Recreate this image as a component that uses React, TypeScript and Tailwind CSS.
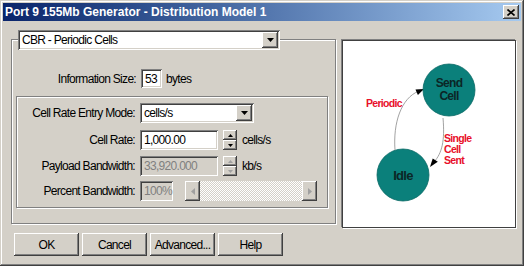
import React from "react";

const raised =
  "shadow-[inset_-1px_-1px_0_#404040,inset_1px_1px_0_#ffffff,inset_-2px_-2px_0_#808080,inset_2px_2px_0_#d4d0c8]";
const sunken =
  "shadow-[inset_1px_1px_0_#808080,inset_-1px_-1px_0_#ffffff,inset_2px_2px_0_#404040,inset_-2px_-2px_0_#d4d0c8]";
const etched = "border border-[#808080] shadow-[inset_1px_1px_0_#ffffff,1px_1px_0_#ffffff]";

function DownTri({ color = "#000" }: { color?: string }) {
  return (
    <svg width="7" height="4" viewBox="0 0 7 4">
      <polygon points="0,0 7,0 3.5,4" fill={color} />
    </svg>
  );
}

function Combo({ w, text }: { w: string; text: string }) {
  return (
    <div className={`${w} h-[20px] bg-white ${sunken} flex items-center pl-[4px] pr-[2px]`}>
      <span className="flex-1 text-black">{text}</span>
      <div className={`w-[16px] h-[16px] bg-[#d4d0c8] ${raised} flex items-center justify-center`}>
        <DownTri />
      </div>
    </div>
  );
}

function Spinner({ disabled }: { disabled?: boolean }) {
  const c = disabled ? "#a0a0a0" : "#000";
  return (
    <div className="w-[14px] h-[20px] flex flex-col">
      <div className={`h-[10px] bg-[#d4d0c8] ${raised} flex items-center justify-center`}>
        <svg width="5" height="3" viewBox="0 0 5 3">
          <polygon points="2.5,0 5,3 0,3" fill={c} />
        </svg>
      </div>
      <div className={`h-[10px] bg-[#d4d0c8] ${raised} flex items-center justify-center`}>
        <svg width="5" height="3" viewBox="0 0 5 3">
          <polygon points="0,0 5,0 2.5,3" fill={c} />
        </svg>
      </div>
    </div>
  );
}

function Label({ w, children }: { w: string; children: React.ReactNode }) {
  return <div className={`${w} text-right text-black shrink-0`}>{children}</div>;
}

function Btn({ children }: { children: React.ReactNode }) {
  return (
    <div className={`w-[65px] h-[23px] bg-[#d4d0c8] ${raised} flex items-center justify-center text-black`}>
      {children}
    </div>
  );
}

function Diagram() {
  return (
    <svg width="172" height="186" viewBox="0 0 172 186">
      <path d="M52 109 C 50 82, 58 57, 76 50" stroke="#8a8a8a" fill="none" strokeWidth="0.8" />
      <polygon points="81,48 72.5,48.6 74.9,54" fill="#000" />
      <path d="M100 77 C 102 100, 99 112, 91 121" stroke="#8a8a8a" fill="none" strokeWidth="0.8" />
      <polygon points="87,126 94.8,120.8 89.7,117.6" fill="#000" />
      <circle cx="106" cy="49" r="26" fill="#0b807b" stroke="#0a6a66" strokeWidth="0.8" />
      <circle cx="60" cy="134" r="26" fill="#0b807b" stroke="#0a6a66" strokeWidth="0.8" />
      <g fontFamily="'Liberation Sans', Arial, sans-serif" fontWeight="bold" fontSize="12" fill="#0b2626" textAnchor="middle">
        <text x="106" y="46">Send</text>
        <text x="106" y="59">Cell</text>
        <text x="60" y="139" fontSize="13">Idle</text>
      </g>
      <g fontFamily="'Liberation Sans', Arial, sans-serif" fontWeight="bold" fontSize="10.5" fill="#e8102a">
        <text x="23" y="66">Periodic</text>
        <text x="101" y="101">Single</text>
        <text x="101" y="112">Cell</text>
        <text x="101" y="123">Sent</text>
      </g>
    </svg>
  );
}

export default function App() {
  return (
    <div
      className="w-[524px] h-[266px] bg-[#d4d0c8] p-[3px] flex flex-col text-[12px] tracking-[-0.7px] leading-none shadow-[inset_-1px_-1px_0_#404040,inset_1px_1px_0_#d4d0c8,inset_-2px_-2px_0_#808080,inset_2px_2px_0_#ffffff]"
      style={{ fontFamily: "'Liberation Sans', Arial, sans-serif" }}
    >
      {/* Title bar */}
      <div className="h-[18px] bg-gradient-to-r from-[#0a246a] to-[#a6caf0] flex items-center justify-between pl-[2px] pr-[2px]">
        <span className="text-white font-bold text-[12px] tracking-normal">
          Port 9 155Mb Generator - Distribution Model 1
        </span>
        <div className={`w-[16px] h-[14px] bg-[#d4d0c8] ${raised} flex items-center justify-center`}>
          <svg width="8" height="7" viewBox="0 0 8 7">
            <path d="M0.5 0.5 L7.5 6.5 M7.5 0.5 L0.5 6.5" stroke="#000" strokeWidth="1.6" />
          </svg>
        </div>
      </div>

      {/* Main */}
      <div className="flex items-start">
        {/* Left group box */}
        <div className={`ml-[8px] mt-[18px] w-[325px] h-[185px] ${etched} flex flex-col`}>
          <div className="-mt-[10px] ml-[6px]">
            <Combo w="w-[262px]" text="CBR - Periodic Cells" />
          </div>
          <div className="mt-[19px] h-[19px] flex items-center">
            <Label w="w-[124px]">Information Size:</Label>
            <div className={`ml-[5px] w-[21px] h-[19px] bg-white ${sunken} flex items-center pl-[4px] text-black`}>
              53
            </div>
            <span className="ml-[4px] text-black">bytes</span>
          </div>

          {/* Inner group */}
          <div className={`mt-[8px] ml-[4px] w-[312px] h-[112px] ${etched} flex flex-col`}>
            <div className="mt-[6px] h-[20px] flex items-center">
              <Label w="w-[118px]">Cell Rate Entry Mode:</Label>
              <div className="ml-[5px]">
                <Combo w="w-[114px]" text="cells/s" />
              </div>
            </div>
            <div className="mt-[7px] h-[20px] flex items-center">
              <Label w="w-[118px]">Cell Rate:</Label>
              <div className={`ml-[5px] w-[78px] h-[20px] bg-white ${sunken} flex items-center pl-[4px] text-black`}>
                1,000.00
              </div>
              <div className="ml-[5px]">
                <Spinner />
              </div>
              <span className="ml-[5px] text-black">cells/s</span>
            </div>
            <div className="mt-[6px] h-[20px] flex items-center">
              <Label w="w-[118px]">Payload Bandwidth:</Label>
              <div className={`ml-[5px] w-[78px] h-[20px] bg-[#d4d0c8] ${sunken} flex items-center pl-[4px] text-[#808080]`}>
                33,920.000
              </div>
              <div className="ml-[5px]">
                <Spinner disabled />
              </div>
              <span className="ml-[5px] text-black">kb/s</span>
            </div>
            <div className="mt-[5px] h-[20px] flex items-center">
              <Label w="w-[118px]">Percent Bandwidth:</Label>
              <div className={`ml-[5px] w-[33px] h-[20px] bg-[#d4d0c8] ${sunken} flex items-center pl-[4px] text-[#808080]`}>
                100%
              </div>
              <div className="ml-[12px] w-[132px] h-[20px] flex">
                <div className={`w-[15px] h-[20px] bg-[#d4d0c8] ${raised} flex items-center justify-center`}>
                  <svg width="4" height="7" viewBox="0 0 4 7">
                    <polygon points="4,0 4,7 0,3.5" fill="#a0a0a0" />
                  </svg>
                </div>
                <div className="flex-1 bg-[image:repeating-conic-gradient(#ffffff_0%_25%,#d4d0c8_0%_50%)] bg-[length:2px_2px]" />
                <div className={`w-[15px] h-[20px] bg-[#d4d0c8] ${raised} flex items-center justify-center`}>
                  <svg width="4" height="7" viewBox="0 0 4 7">
                    <polygon points="0,0 0,7 4,3.5" fill="#a0a0a0" />
                  </svg>
                </div>
              </div>
            </div>
          </div>
        </div>

        {/* Diagram */}
        <div className="ml-[6px] mt-[19px] w-[174px] h-[188px] bg-white border border-[#404040] shadow-[-1px_-1px_0_#808080,1px_1px_0_#ffffff]">
          <Diagram />
        </div>
      </div>

      {/* Buttons */}
      <div className="mt-[5px] ml-[11px] flex gap-[3px]">
        <Btn>OK</Btn>
        <Btn>Cancel</Btn>
        <Btn>Advanced...</Btn>
        <Btn>Help</Btn>
      </div>
    </div>
  );
}
